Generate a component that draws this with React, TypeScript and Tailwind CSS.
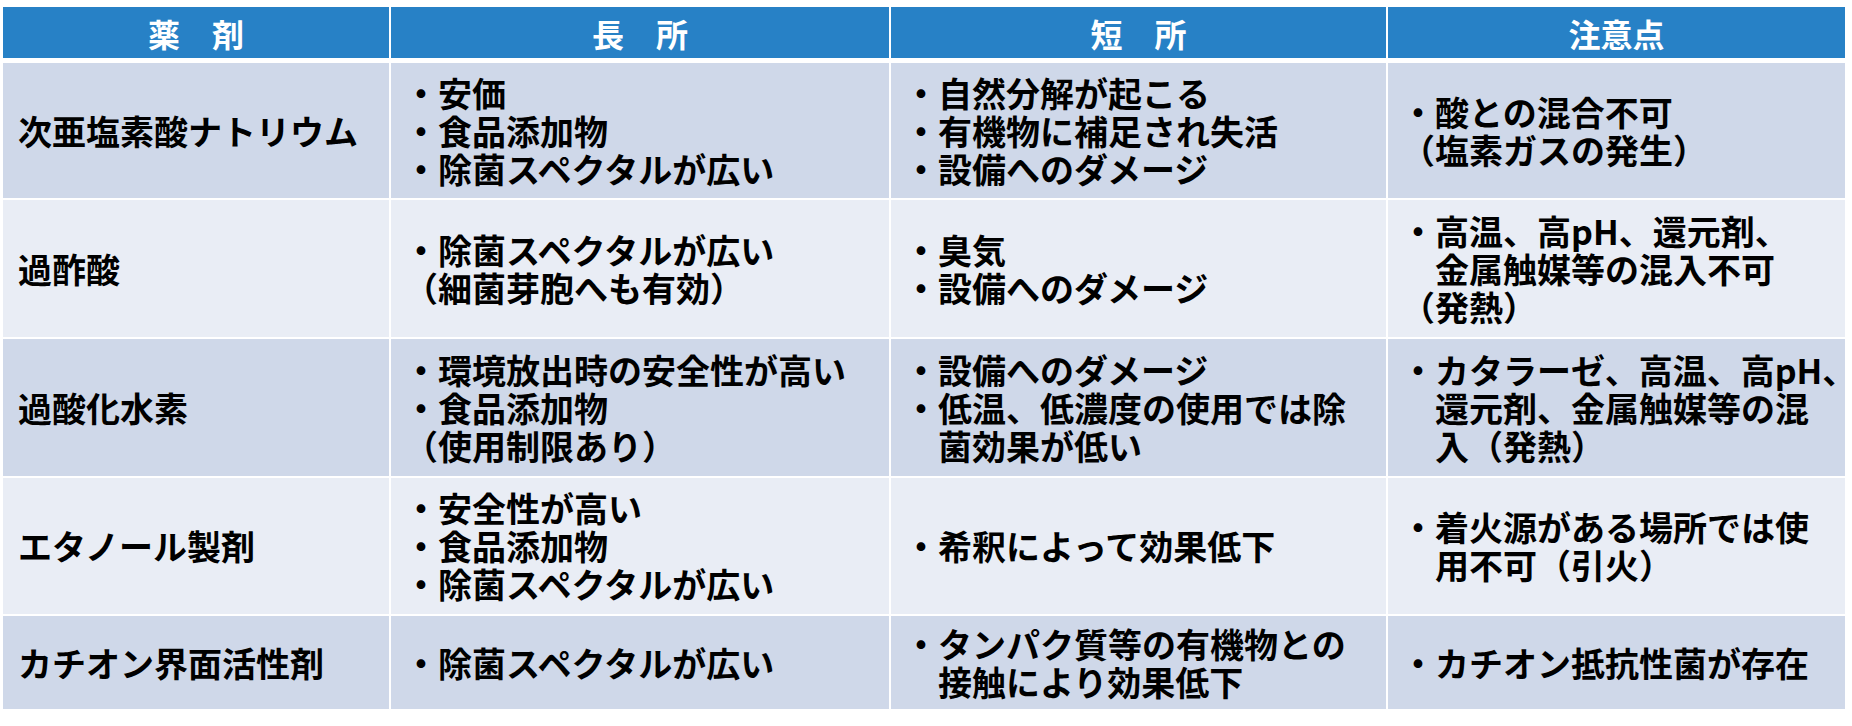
import React from 'react';

type Row = {
  name: string;
  merits: string[];
  demerits: string[];
  notes: string[];
  height: string;
  band: string;
};

const rows: Row[] = [
  {
    name: '次亜塩素酸ナトリウム',
    merits: ['・安価', '・食品添加物', '・除菌スペクタルが広い'],
    demerits: ['・自然分解が起こる', '・有機物に補足され失活', '・設備へのダメージ'],
    notes: ['・酸との混合不可', '（塩素ガスの発生）'],
    height: 'h-[135px]',
    band: 'bg-[#cfd8e9]',
  },
  {
    name: '過酢酸',
    merits: ['・除菌スペクタルが広い', '（細菌芽胞へも有効）'],
    demerits: ['・臭気', '・設備へのダメージ'],
    notes: ['・高温、高pH、還元剤、', '　金属触媒等の混入不可', '（発熱）'],
    height: 'h-[137px]',
    band: 'bg-[#e9edf5]',
  },
  {
    name: '過酸化水素',
    merits: ['・環境放出時の安全性が高い', '・食品添加物', '（使用制限あり）'],
    demerits: ['・設備へのダメージ', '・低温、低濃度の使用では除', '　菌効果が低い'],
    notes: ['・カタラーゼ、高温、高pH、', '　還元剤、金属触媒等の混', '　入（発熱）'],
    height: 'h-[137px]',
    band: 'bg-[#cfd8e9]',
  },
  {
    name: 'エタノール製剤',
    merits: ['・安全性が高い', '・食品添加物', '・除菌スペクタルが広い'],
    demerits: ['・希釈によって効果低下'],
    notes: ['・着火源がある場所では使', '　用不可（引火）'],
    height: 'h-[136px]',
    band: 'bg-[#e9edf5]',
  },
  {
    name: 'カチオン界面活性剤',
    merits: ['・除菌スペクタルが広い'],
    demerits: ['・タンパク質等の有機物との', '　接触により効果低下'],
    notes: ['・カチオン抵抗性菌が存在'],
    height: 'h-[93px]',
    band: 'bg-[#cfd8e9]',
  },
];

const cols = 'grid grid-cols-[386px_498px_495px_457px] gap-x-[2px]';

function Cell({ lines, band }: { lines: string[]; band: string }) {
  return (
    <div className={`${band} flex flex-col justify-center pl-[13px]`}>
      {lines.map((line, i) => (
        <div key={i} className="whitespace-pre leading-[38px]">
          {line}
        </div>
      ))}
    </div>
  );
}

export default function App() {
  return (
    <div
      className="w-[1852px] h-[726px] bg-white pt-[7px] pl-[3px] text-black"
      style={{ fontFamily: '"Noto Sans CJK JP", "Noto Sans", sans-serif' }}
    >
      <div className="flex flex-col gap-y-[2px] w-[1842px]">
        <div className={`${cols} h-[51px] mb-[3px]`}>
          {['薬　剤', '長　所', '短　所', '注意点'].map((h) => (
            <div
              key={h}
              className="bg-[#2781c6] flex items-center justify-center text-white font-bold text-[32px] whitespace-pre"
            >
              {h}
            </div>
          ))}
        </div>

        {rows.map((row) => (
          <div key={row.name} className={`${cols} ${row.height} text-[34px] font-bold`}>
            <div className={`${row.band} flex items-center pl-[15px]`}>
              <span className="leading-[38px]">{row.name}</span>
            </div>
            <Cell lines={row.merits} band={row.band} />
            <Cell lines={row.demerits} band={row.band} />
            <Cell lines={row.notes} band={row.band} />
          </div>
        ))}
      </div>
    </div>
  );
}
